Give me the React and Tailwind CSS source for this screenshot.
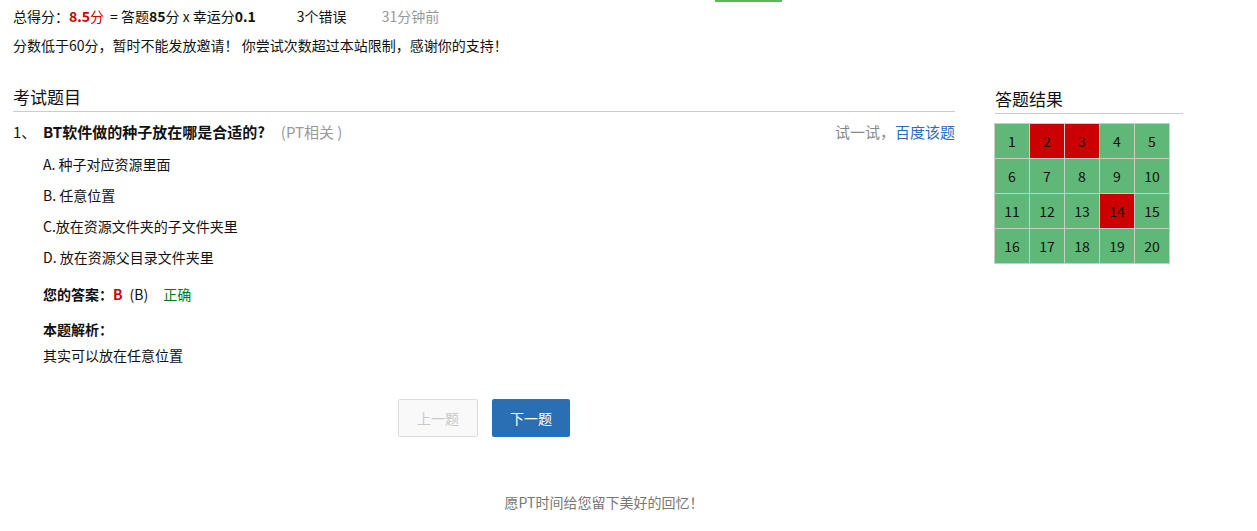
import React from "react";

const wrong = [2, 3, 14];

export default function App() {
  const cells = Array.from({ length: 20 }, (_, i) => i + 1);
  return (
    <div
      className="relative min-h-[531px] w-[1257px] bg-white text-[14px] text-[#111]"
      style={{ fontFamily: '"Noto Sans CJK SC", "Noto Sans", sans-serif' }}
    >
      {/* top progress sliver */}
      <div className="absolute left-[715px] top-0 h-[2px] w-[67px] bg-[#5cb85c]" />

      {/* 成绩 */}
      <div className="px-[13px] pt-[5px]">
        <div className="flex h-[22px] items-center">
          <span>总得分：</span>
          <span className="font-bold text-[#cc0000]">8.5</span>
          <span className="text-[#cc0000]">分</span>
          <span className="ml-[6px]">= 答题</span>
          <span className="font-bold">85</span>
          <span>分 x 幸运分</span>
          <span className="font-bold">0.1</span>
          <span className="ml-[41px]">3个错误</span>
          <span className="ml-[35px] text-[#999]">31分钟前</span>
        </div>
        <div className="mt-[7px] flex h-[22px] items-center">
          分数低于60分，暂时不能发放邀请！ 你尝试次数超过本站限制，感谢你的支持！
        </div>
      </div>

      <div className="mt-[27px] flex px-[13px]">
        {/* 考试题目 */}
        <div className="w-[942px]">
          <div className="flex h-[29px] items-end border-b border-[#ccc] pb-[2px] text-[17px]">
            考试题目
          </div>
          <div className="mt-[8px] flex h-[24px] items-center text-[15px]">
            <span className="w-[30px]">1、</span>
            <span className="font-bold">BT软件做的种子放在哪是合适的?</span>
            <span className="ml-[16px] text-[#999]">(PT相关 )</span>
            <span className="ml-auto text-[#888]">试一试，</span>
            <span className="text-[#2a6ebb]">百度该题</span>
          </div>
          <div className="pl-[30px]">
            <div className="mt-[8px] flex h-[24px] items-center">A. 种子对应资源里面</div>
            <div className="mt-[7px] flex h-[24px] items-center">B. 任意位置</div>
            <div className="mt-[7px] flex h-[24px] items-center">C.放在资源文件夹的子文件夹里</div>
            <div className="mt-[7px] flex h-[24px] items-center">D. 放在资源父目录文件夹里</div>
            <div className="mt-[13px] flex h-[24px] items-center">
              <span className="font-bold">您的答案：</span>
              <span className="font-bold text-[#cc0000]">B</span>
              <span className="ml-[7px]">(B)</span>
              <span className="ml-[15px] text-[#007a1f]">正确</span>
            </div>
            <div className="mt-[11px] flex h-[24px] items-center font-bold">本题解析：</div>
            <div className="mt-[2px] flex h-[24px] items-center">其实可以放在任意位置</div>
          </div>
          <div className="mt-[32px] flex justify-center gap-[14px]">
            <button className="h-[38px] w-[80px] rounded-[2px] border border-[#ddd] bg-[#f9f9f9] text-[14px] text-[#c8c8c8]">
              上一题
            </button>
            <button className="h-[38px] w-[78px] rounded-[2px] bg-[#2a6fb4] text-[14px] text-white">
              下一题
            </button>
          </div>
        </div>

        {/* 答题结果 */}
        <div className="ml-[40px] w-[188px]">
          <div className="flex h-[31px] items-end border-b border-[#ccc] pb-[2px] text-[17px]">
            答题结果
          </div>
          <div className="mt-[9px] grid w-[176px] -translate-x-[1px] grid-cols-5 border-l border-t border-[#ccc]">
            {cells.map((n) => (
              <div
                key={n}
                className={`flex h-[35px] items-center justify-center border-b border-r border-[#ccc] text-[14px] ${
                  wrong.includes(n) ? "bg-[#cc0000]" : "bg-[#60b878]"
                }`}
              >
                {n}
              </div>
            ))}
          </div>
        </div>
      </div>

      <div className="mt-[55px] w-[1208px] text-center text-[14px] text-[#777]">
        愿PT时间给您留下美好的回忆！
      </div>
    </div>
  );
}
